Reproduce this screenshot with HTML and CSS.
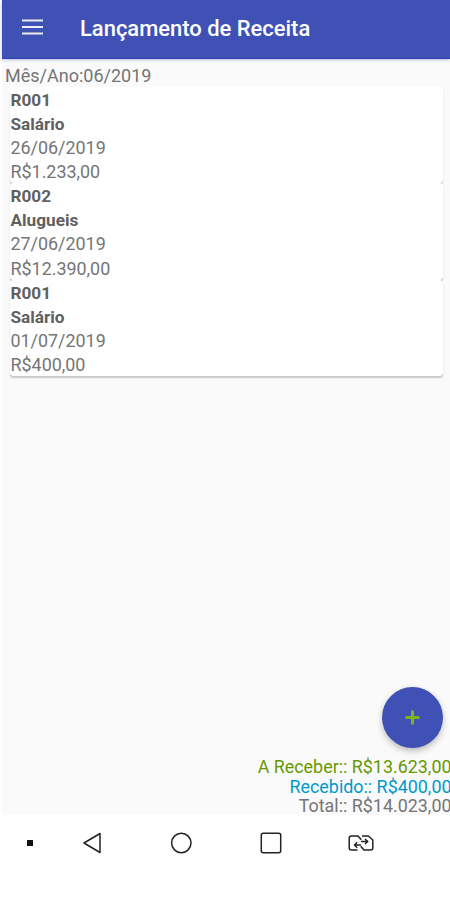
FILE: index.html
```
<!DOCTYPE html>
<html lang="pt-BR">
<head>
<meta charset="utf-8">
<title>Lançamento de Receita</title>
<link rel="stylesheet" href="styles.css">
</head>
<body>
<div class="app">
  <header class="toolbar">
    <svg class="menu" width="22" height="16" viewBox="0 0 22 16"><path d="M0 1.500h21M0 8h21M0 14.500h21" stroke="#e9ecfa" stroke-width="2"/></svg>
    <h1>Lançamento de Receita</h1>
  </header>
  <main>
    <p class="period">Mês/Ano:06/2019</p>
    <div class="list">
      <article class="card"><b>R001</b><b>Salário</b><span>26/06/2019</span><span>R$1.233,00</span></article>
      <article class="card"><b>R002</b><b>Alugueis</b><span>27/06/2019</span><span>R$12.390,00</span></article>
      <article class="card"><b>R001</b><b>Salário</b><span>01/07/2019</span><span>R$400,00</span></article>
    </div>
    <button class="fab" aria-label="Adicionar"><svg width="15" height="15" viewBox="0 0 15 15"><path d="M7.500 .5v14M.5 7.500h14" stroke="#7cb518" stroke-width="3"/></svg></button>
    <div class="totals">
      <p class="due">A Receber:: R$13.623,00</p>
      <p class="received">Recebido:: R$400,00</p>
      <p class="total">Total:: R$14.023,00</p>
    </div>
  </main>
</div>
<nav class="navbar">
  <svg class="dot" width="8" height="8" viewBox="0 0 8 8"><rect x="1" y="1" width="6" height="6"/></svg>
  <svg class="back" width="20" height="22" viewBox="0 0 20 22"><path d="M18 1.500v19L2 11z"/></svg>
  <svg class="home" width="22" height="22" viewBox="0 0 22 22"><circle cx="11.300" cy="11" r="9.700"/></svg>
  <svg class="recent" width="22" height="22" viewBox="0 0 22 22"><rect x="1.300" y="1.300" width="19.400" height="19.400" rx="2"/></svg>
  <svg class="swap" width="26" height="18" viewBox="0 0 26 18"><path d="M9.500 16H3.500Q1.200 16 1.200 13.700V4.300Q1.200 2 3.500 2H10l3.300 3.800M14 2h6.500l4.300 4V13.700Q24.800 16 22.500 16H16l-3.300-3.800"/><path d="M13 7.500h6M17 5l2.800 2.500L17 10M13 11H7M9.200 8.300L6.500 11l2.700 2.700"/></svg>
</nav>
</body>
</html>
```
FILE: styles.css
```
* { box-sizing: border-box; }
body {
  margin: 0;
  height: 900px;
  overflow: hidden;
  background: #fff;
  color: #757575;
  font: 17.9px/24.1px Roboto, sans-serif;
}
h1, p { margin: 0; }
.app {
  height: 815px;
  margin-left: 2px;
  display: flex;
  flex-direction: column;
  background: #fafafa;
}
.toolbar {
  height: 59px;
  flex: none;
  display: flex;
  align-items: center;
  padding: 0 0 4px 20px;
  background: #3f51b5;
  border-bottom: 1px solid #2c41b0;
  box-shadow: 0 1px 3px #b5bde0;
}
.menu { margin-right: 36px; }
h1 {
  padding-top: 3px;
  color: #fff;
  font-size: 21.95px;
  line-height: 28px;
  font-weight: 500;
  white-space: nowrap;
}
main {
  flex: 1;
  min-height: 0;
  display: flex;
  flex-direction: column;
  padding-top: 5px;
}
.period { padding-left: 3px; height: 23px; font-size: 18px; }
.list { margin: 0 7px 0 8px; }
.card {
  height: 96.3px;
  display: flex;
  flex-direction: column;
  padding: 1px 0 0 .5px;
  background: #fff;
  border-radius: 4px;
  box-shadow: 0 2px 1.5px -.5px #c8c8c8;
}
.card b { font-size: 17.2px; color: #606060; }
.fab {
  width: 61px;
  height: 61px;
  margin: auto 7px 7px auto;
  display: grid;
  place-items: center;
  padding: 0;
  border: 0;
  border-radius: 50%;
  background: #3f51b5;
  box-shadow: 0 3px 6px #bbb;
}
.totals {
  height: 60px;
  padding-top: 2px;
  text-align: right;
  margin-right: -1.5px;
  font-size: 17.9px;
  line-height: 19.5px;
  white-space: nowrap;
}
.due { color: #669900; }
.received { color: #0099cc; }
.navbar {
  height: 56px;
  display: flex;
  align-items: center;
  padding-left: 26px;
}
.navbar svg { fill: none; stroke: #222; stroke-width: 1.5; stroke-linejoin: round; }
.navbar .dot { fill: #111; stroke: none; }
.back { margin-left: 48px; }
.home { margin-left: 68px; }
.recent { margin-left: 68px; }
.swap { margin-left: 66px; }
```
